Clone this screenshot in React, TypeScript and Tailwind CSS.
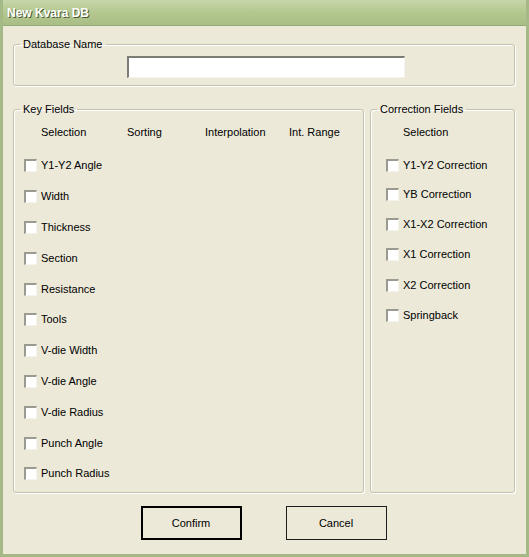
import React from "react";

const keyRows = [
  "Y1-Y2 Angle",
  "Width",
  "Thickness",
  "Section",
  "Resistance",
  "Tools",
  "V-die Width",
  "V-die Angle",
  "V-die Radius",
  "Punch Angle",
  "Punch Radius",
];

const corrRows = [
  "Y1-Y2 Correction",
  "YB Correction",
  "X1-X2 Correction",
  "X1 Correction",
  "X2 Correction",
  "Springback",
];

function Check() {
  return (
    <span className="block w-[13px] h-[13px] shrink-0 bg-white border-t-2 border-l-2 border-t-[#9a9a90] border-l-[#9a9a90] border-b border-r border-b-[#f4f3ec] border-r-[#f4f3ec]" />
  );
}

function Row({ label, h }: { label: string; h: string }) {
  return (
    <div className={`flex items-center gap-[4px] ${h}`}>
      <Check />
      <span className="leading-[13px]">{label}</span>
    </div>
  );
}

export default function App() {
  return (
    <div
      className="w-[529px] h-[557px] bg-[#ece9d8] text-[11px] text-black flex flex-col border-l-[3px] border-r-[3px] border-b-[3px] border-[#a4b985] overflow-hidden"
      style={{ fontFamily: '"Liberation Sans", Arial, sans-serif' }}
    >
      <div className="h-[26px] -mx-[3px] px-[7px] flex items-center bg-gradient-to-b from-[#c7d6a9] via-[#b3c78f] to-[#a9bd86] border-b border-[#97ab76]">
        <span className="text-white font-bold text-[12px] [text-shadow:1px_1px_0_#4b5a35]">
          New Kvara DB
        </span>
      </div>

      <div className="flex-1 flex flex-col px-[10px] pt-[12px]">
        <fieldset className="border border-[#c5c2b2] rounded-[3px] w-[502px] px-0 pb-[7px] shadow-[inset_1px_1px_0_#fff,1px_1px_0_#fff]">
          <legend className="ml-[6px] px-[3px] leading-[13px]">Database Name</legend>
          <div className="flex pl-[113px] mt-[5px]">
            <div className="w-[278px] h-[22px] bg-white border-t-2 border-l-2 border-t-[#7c7c74] border-l-[#7c7c74] border-b border-r border-b-[#f4f3ec] border-r-[#f4f3ec]" />
          </div>
        </fieldset>

        <div className="flex gap-[6px] mt-[17px]">
          <fieldset className="border border-[#c5c2b2] rounded-[3px] w-[351px] h-[390px] px-0 shadow-[inset_1px_1px_0_#fff,1px_1px_0_#fff]">
            <legend className="ml-[6px] px-[3px] leading-[13px]">Key Fields</legend>
            <div className="flex mt-[10px] leading-[13px]">
              <span className="ml-[27px] w-[86px]">Selection</span>
              <span className="w-[78px]">Sorting</span>
              <span className="w-[84px]">Interpolation</span>
              <span>Int. Range</span>
            </div>
            <div className="flex flex-col ml-[10px] mt-[11.6px]">
              {keyRows.map((r) => (
                <Row key={r} label={r} h="h-[30.8px]" />
              ))}
            </div>
          </fieldset>

          <fieldset className="border border-[#c5c2b2] rounded-[3px] w-[145px] h-[390px] px-0 shadow-[inset_1px_1px_0_#fff,1px_1px_0_#fff]">
            <legend className="ml-[6px] px-[3px] leading-[13px]">Correction Fields</legend>
            <div className="flex mt-[10px] leading-[13px]">
              <span className="ml-[32px]">Selection</span>
            </div>
            <div className="flex flex-col ml-[15px] mt-[12px]">
              <Row label={corrRows[0]} h="h-[28px]" />
              {corrRows.slice(1).map((r) => (
                <Row key={r} label={r} h="h-[30.4px]" />
              ))}
            </div>
          </fieldset>
        </div>

        <div className="flex justify-center gap-[44px] mt-[13px] pr-[2px]">
          <button className="w-[101px] h-[34px] border-2 border-black bg-[#ece9d8] text-[11px] leading-[13px]">
            Confirm
          </button>
          <button className="w-[101px] h-[34px] border border-[#1c1c1c] bg-[#ece9d8] text-[11px] leading-[13px]">
            Cancel
          </button>
        </div>
      </div>
    </div>
  );
}
